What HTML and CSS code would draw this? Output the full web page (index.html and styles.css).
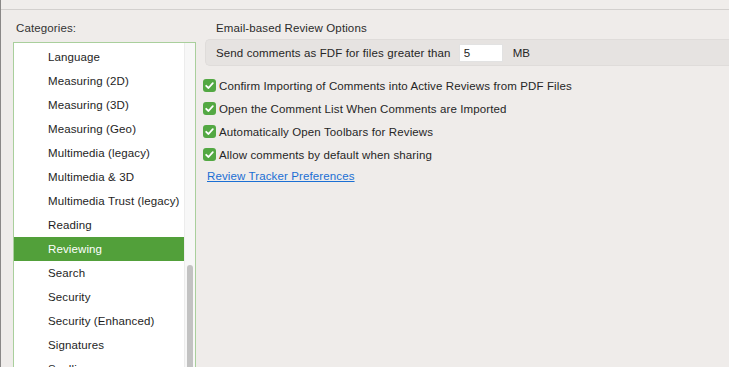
FILE: index.html
```html
<!DOCTYPE html>
<html>
<head>
    <title>Preferences - Reviewing</title>
    <link rel="stylesheet" href="styles.css">
</head>
<body>
    <div class="titlebar"></div>
    <div class="window">
        <div class="sidebar">
            <div class="cat-label">Categories:</div>
            <div class="cat-list">
                <div class="cat-items">
                    <div class="cat">Language</div>
                    <div class="cat">Measuring (2D)</div>
                    <div class="cat">Measuring (3D)</div>
                    <div class="cat">Measuring (Geo)</div>
                    <div class="cat">Multimedia (legacy)</div>
                    <div class="cat">Multimedia &amp; 3D</div>
                    <div class="cat">Multimedia Trust (legacy)</div>
                    <div class="cat">Reading</div>
                    <div class="cat selected">Reviewing</div>
                    <div class="cat">Search</div>
                    <div class="cat">Security</div>
                    <div class="cat">Security (Enhanced)</div>
                    <div class="cat">Signatures</div>
                    <div class="cat">Spelling</div>
                </div>
                <div class="scrolltrack">
                    <div class="scrollthumb"></div>
                </div>
            </div>
        </div>

        <div class="content">
            <div class="section-title">Email-based Review Options</div>
            <div class="group">
                <span>Send comments as FDF for files greater than</span>
                <input type="text" class="size-input" value="5">
                <span class="unit">MB</span>
            </div>

            <div class="options">
                <label class="option"><span class="check"><svg viewBox="0 0 13 13" width="13" height="13"><path d="M3.2 6.8 L5.5 9 L9.8 4.2" fill="none" stroke="#fff" stroke-width="1.8" stroke-linecap="round" stroke-linejoin="round"/></svg></span>Confirm Importing of Comments into Active Reviews from PDF Files</label>
                <label class="option"><span class="check"><svg viewBox="0 0 13 13" width="13" height="13"><path d="M3.2 6.8 L5.5 9 L9.8 4.2" fill="none" stroke="#fff" stroke-width="1.8" stroke-linecap="round" stroke-linejoin="round"/></svg></span>Open the Comment List When Comments are Imported</label>
                <label class="option"><span class="check"><svg viewBox="0 0 13 13" width="13" height="13"><path d="M3.2 6.8 L5.5 9 L9.8 4.2" fill="none" stroke="#fff" stroke-width="1.8" stroke-linecap="round" stroke-linejoin="round"/></svg></span>Automatically Open Toolbars for Reviews</label>
                <label class="option"><span class="check"><svg viewBox="0 0 13 13" width="13" height="13"><path d="M3.2 6.8 L5.5 9 L9.8 4.2" fill="none" stroke="#fff" stroke-width="1.8" stroke-linecap="round" stroke-linejoin="round"/></svg></span>Allow comments by default when sharing</label>
            </div>

            <a href="#" class="tracker-link">Review Tracker Preferences</a>
        </div>
    </div>
</body>
</html>
```

FILE: styles.css
```css
html, body {
    height: 100%;
}

body {
    margin: 0;
    font-family: "Liberation Sans", Arial, sans-serif;
    font-size: 11.5px;
    letter-spacing: 0.12px;
    color: #262626;
    background-color: #efecea;
    overflow: hidden;
    border-left: 1px solid #8a8887;
    box-sizing: border-box;
}

.titlebar {
    height: 9px;
    border-bottom: 1px solid #d3d0ce;
    background-color: #f0edeb;
}

.window {
    display: flex;
    height: calc(100% - 10px);
}

/* Left categories column */
.sidebar {
    width: 195px;
    flex-shrink: 0;
    padding-left: 12px;
    box-sizing: border-box;
    display: flex;
    flex-direction: column;
}

.cat-label {
    height: 32px;
    line-height: 16px;
    padding-top: 10px;
    padding-left: 3px;
    box-sizing: border-box;
    color: #333;
}

.cat-list {
    flex: 1;
    display: flex;
    background-color: #fff;
    border: 1px solid #a9cf9c;
    border-bottom: none;
    overflow: hidden;
}

.cat-items {
    flex: 1;
    padding-top: 2px;
}

.cat {
    height: 24px;
    line-height: 24px;
    padding-left: 34px;
    color: #1e1e1e;
    white-space: nowrap;
}

.cat.selected {
    background-color: #52a03a;
    color: #fff;
}

.scrolltrack {
    width: 10px;
    background-color: #f7f7f7;
    border-left: 1px solid #ececec;
    padding-top: 222px;
    display: flex;
    justify-content: center;
}

.scrollthumb {
    width: 6px;
    height: 200px;
    border-radius: 3px;
    background-color: #c2c2c2;
}

/* Right options panel */
.content {
    flex: 1;
    min-width: 0;
    padding-left: 9px;
    display: flex;
    flex-direction: column;
}

.section-title {
    height: 29px;
    line-height: 16px;
    padding-top: 10px;
    padding-left: 11px;
    box-sizing: border-box;
    color: #2b2b2b;
}

.group {
    display: flex;
    align-items: center;
    height: 27px;
    padding-left: 10px;
    background-color: #e6e3e1;
    border: 1px solid #dfdcda;
    border-right: none;
    border-radius: 5px 0 0 5px;
    box-sizing: border-box;
    white-space: nowrap;
}

.size-input {
    width: 44px;
    height: 18px;
    margin-left: 8px;
    margin-right: 10px;
    padding: 0 4px;
    box-sizing: border-box;
    border: 1px solid #e2e2e2;
    background-color: #fff;
    font-family: inherit;
    font-size: 11.5px;
    color: #222;
}

.options {
    display: flex;
    flex-direction: column;
    margin-top: 8px;
    margin-left: -2px;
}

.option {
    display: flex;
    align-items: center;
    height: 23px;
    gap: 3px;
    color: #262626;
    white-space: nowrap;
}

.check {
    width: 13px;
    height: 13px;
    border-radius: 3px;
    background-color: #53a843;
    display: flex;
}

.tracker-link {
    margin-top: 2px;
    margin-left: 2px;
    color: #1b6fd4;
    text-decoration: underline;
    line-height: 16px;
    align-self: flex-start;
}
```
